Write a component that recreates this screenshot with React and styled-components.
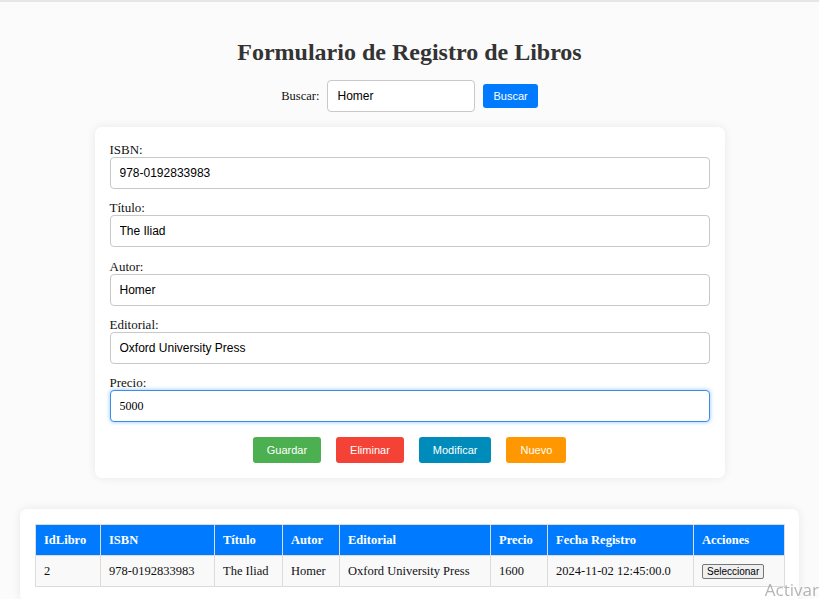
import React from 'react'
import styled, { createGlobalStyle, css } from 'styled-components'

const GlobalStyle = createGlobalStyle`
  html, body {
    margin: 0;
    padding: 0;
  }
  body {
    background: #fbfbfb;
    font-family: "Liberation Serif", "Times New Roman", serif;
    font-size: 13px;
    color: #111;
    border-top: 2px solid #e6e6e6;
  }
`

const Page = styled.div`
  padding: 20px 20px 0;
`

const Title = styled.h2`
  text-align: center;
  font-size: 24px;
  line-height: 28px;
  color: #333;
  margin: 16px 0 14px;
`

const SearchRow = styled.div`
  display: flex;
  justify-content: center;
  align-items: center;
  gap: 8px;
  height: 32px;
`

const Label = styled.label`
  display: block;
  font-size: 13px;
  line-height: 15px;
  ${props => props.inline && `display: inline-block; font-size: 12.5px;`}
`

const Input = styled.input`
  box-sizing: border-box;
  height: 32px;
  width: ${props => props.small ? '148px' : '100%'};
  border: 1px solid #c8c8c8;
  border-radius: 4px;
  padding: 0 9px;
  font-family: ${props => props.serif ? '"Liberation Serif", serif' : '"Liberation Sans", Arial, sans-serif'};
  font-size: 12px;
  color: #000;
  background: #fff;
  outline: none;
  ${props => props.focused && css`
    border-color: #3d8ee8;
    box-shadow: 0 0 4px rgba(0, 123, 255, 0.45);
  `}
`

const SmallButton = styled.button`
  height: 24px;
  padding: 0 10px;
  border: none;
  border-radius: 3px;
  background: #007bff;
  color: #fff;
  font-family: "Liberation Sans", Arial, sans-serif;
  font-size: 11px;
`

const Card = styled.div`
  box-sizing: border-box;
  background: #fff;
  border-radius: 7px;
  box-shadow: 0 0 10px rgba(0, 0, 0, 0.08);
  padding: 15px;
  margin: 0 auto;
  width: ${props => props.wide ? '100%' : '630px'};
`

const FormCard = styled(Card)`
  margin-top: 15px;
`

const TableCard = styled(Card)`
  margin-top: 31px;
`

const Field = styled.div`
  margin-bottom: ${props => props.last ? '15px' : '11.3px'};
`

const ButtonRow = styled.div`
  display: flex;
  justify-content: center;
  gap: 15px;
`

const ActionButton = styled.button`
  height: 26px;
  padding: 0 14px;
  border: none;
  border-radius: 3px;
  background: ${props => props.color};
  color: #fff;
  font-family: "Liberation Sans", Arial, sans-serif;
  font-size: 11px;
`

const Table = styled.table`
  width: 100%;
  border-collapse: collapse;
  table-layout: fixed;
  font-size: 12.5px;
`

const Th = styled.th`
  background: #007bff;
  color: #fff;
  font-weight: bold;
  text-align: left;
  padding: 0 8px;
  height: 30px;
  border: 1px solid #dcdcdc;
`

const Td = styled.td`
  background: #f9f9f9;
  padding: 0 8px;
  height: 30px;
  border: 1px solid #dcdcdc;
  white-space: nowrap;
`

const SelectButton = styled.button`
  font-family: "Liberation Sans", Arial, sans-serif;
  font-size: 10px;
  padding: 1px 4px;
  background: #efefef;
  border: 1px solid #767676;
  border-radius: 2px;
  color: #000;
`

const Watermark = styled.div`
  position: fixed;
  right: 0;
  bottom: -2px;
  font-family: "Open Sans", "Noto Sans", sans-serif;
  font-size: 17px;
  color: rgba(120, 120, 120, 0.55);
  pointer-events: none;
`

const fields = [
  { label: 'ISBN:', value: '978-0192833983' },
  { label: 'Título:', value: 'The Iliad' },
  { label: 'Autor:', value: 'Homer' },
  { label: 'Editorial:', value: 'Oxford University Press' },
  { label: 'Precio:', value: '5000', focused: true },
]

const actions = [
  { text: 'Guardar', color: '#4caf50' },
  { text: 'Eliminar', color: '#f44336' },
  { text: 'Modificar', color: '#008cba' },
  { text: 'Nuevo', color: '#ff9800' },
]

const columns = [
  { name: 'IdLibro', width: 65 },
  { name: 'ISBN', width: 114 },
  { name: 'Título', width: 68 },
  { name: 'Autor', width: 57 },
  { name: 'Editorial', width: 151 },
  { name: 'Precio', width: 57 },
  { name: 'Fecha Registro', width: 146 },
  { name: 'Acciones', width: 91 },
]

const rows = [
  ['2', '978-0192833983', 'The Iliad', 'Homer', 'Oxford University Press', '1600', '2024-11-02 12:45:00.0'],
]

export default function App() {
  return (
    <Page>
      <GlobalStyle />
      <Title>Formulario de Registro de Libros</Title>

      <SearchRow>
        <Label inline>Buscar:</Label>
        <Input small defaultValue="Homer" />
        <SmallButton>Buscar</SmallButton>
      </SearchRow>

      <FormCard>
        {fields.map((f, i) => (
          <Field key={f.label} last={i === fields.length - 1}>
            <Label>{f.label}</Label>
            <Input defaultValue={f.value} focused={f.focused} serif={f.focused} />
          </Field>
        ))}
        <ButtonRow>
          {actions.map(a => (
            <ActionButton key={a.text} color={a.color}>{a.text}</ActionButton>
          ))}
        </ButtonRow>
      </FormCard>

      <TableCard wide>
        <Table>
          <colgroup>
            {columns.map(c => <col key={c.name} width={c.width} />)}
          </colgroup>
          <thead>
            <tr>
              {columns.map(c => <Th key={c.name}>{c.name}</Th>)}
            </tr>
          </thead>
          <tbody>
            {rows.map(r => (
              <tr key={r[0]}>
                {r.map((cell, i) => <Td key={i}>{cell}</Td>)}
                <Td><SelectButton>Seleccionar</SelectButton></Td>
              </tr>
            ))}
          </tbody>
        </Table>
      </TableCard>

      <Watermark>Activar</Watermark>
    </Page>
  )
}
